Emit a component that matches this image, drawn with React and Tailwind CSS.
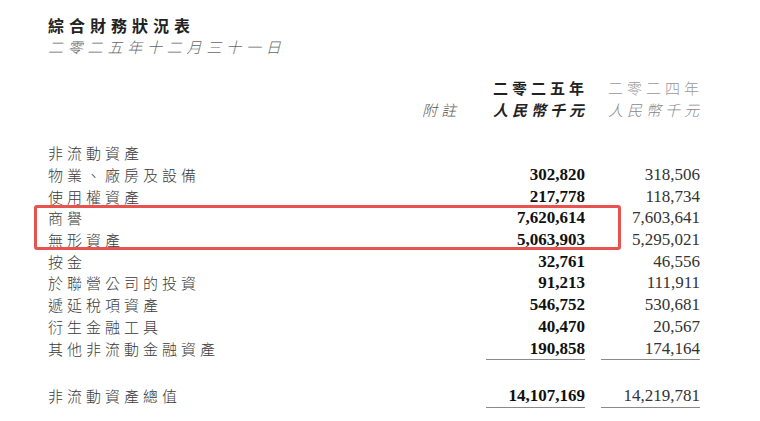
import React from 'react';

const rows = [
  { label: '非流動資產', cur: '', prev: '' },
  { label: '物業、廠房及設備', cur: '302,820', prev: '318,506' },
  { label: '使用權資產', cur: '217,778', prev: '118,734' },
  { label: '商譽', cur: '7,620,614', prev: '7,603,641', hl: true },
  { label: '無形資產', cur: '5,063,903', prev: '5,295,021', hl: true },
  { label: '按金', cur: '32,761', prev: '46,556' },
  { label: '於聯營公司的投資', cur: '91,213', prev: '111,911' },
  { label: '遞延稅項資產', cur: '546,752', prev: '530,681' },
  { label: '衍生金融工具', cur: '40,470', prev: '20,567' },
  { label: '其他非流動金融資產', cur: '190,858', prev: '174,164' },
];

const cjk = "font-['Noto_Sans_CJK_TC','Noto_Sans_CJK_SC',sans-serif]";
const num = "font-['Liberation_Serif','Times_New_Roman',serif] text-[17px]";

const Row = ({ r }) => (
  <div className="grid grid-cols-[1fr_50px_99px_99px] gap-x-[16px] h-[21.7px] items-center">
    <div className={`${cjk} text-[15px] tracking-[4px] text-[#3a3a3a] font-light leading-none whitespace-nowrap`}>{r.label}</div>
    <div></div>
    <div className={`${num} font-bold text-[#111] text-right leading-none`}>{r.cur}</div>
    <div className={`${num} text-[#333] text-right leading-none`}>{r.prev}</div>
  </div>
);

const Rule = () => (
  <div className="grid grid-cols-[1fr_50px_99px_99px] gap-x-[16px]">
    <div></div>
    <div></div>
    <div className="h-px bg-[#8a8a8a]"></div>
    <div className="h-px bg-[#8a8a8a]"></div>
  </div>
);

export default function App() {
  const top = rows.slice(0, 3);
  const hl = rows.slice(3, 5);
  const rest = rows.slice(5);

  return (
    <div className="w-[760px] h-[421px] bg-white overflow-hidden pl-[48px] pr-[60px] pt-[14px]">
      {/* Title */}
      <div className={`${cjk} text-[16px] leading-[22px] font-bold tracking-[5px] text-[#222]`}>綜合財務狀況表</div>
      <div className={`${cjk} text-[15px] leading-[22px] italic font-light tracking-[4.8px] text-[#666]`}>二零二五年十二月三十一日</div>

      {/* Column headers */}
      <div className={`${cjk} mt-[19px] grid grid-cols-[1fr_50px_99px_99px] gap-x-[16px] text-[15px] leading-[22px]`}>
        <div></div>
        <div></div>
        <div className="text-right font-bold tracking-[4px] text-[#222] -mr-[3px]">二零二五年</div>
        <div className="text-right font-light tracking-[4px] text-[#999] -mr-[3px]">二零二四年</div>
        <div></div>
        <div className="text-right italic font-light tracking-[4px] text-[#555] mr-[10px] whitespace-nowrap">附註</div>
        <div className="text-right italic font-bold tracking-[4px] text-[#222] -mr-[3px]">人民幣千元</div>
        <div className="text-right italic font-light tracking-[4px] text-[#888] -mr-[3px]">人民幣千元</div>
      </div>

      {/* Body */}
      <div className="mt-[21px]">
        {top.map((r, i) => <Row key={i} r={r} />)}
        <div className="relative">
          {hl.map((r, i) => <Row key={i} r={r} />)}
          <div className="absolute -left-[14px] -top-[2px] bottom-0 right-[79px] border-[3px] border-[#e8534f] rounded-[3px]"></div>
        </div>
        {rest.map((r, i) => <Row key={i} r={r} />)}
        <Rule />
      </div>

      {/* Total */}
      <div className="mt-[25px]">
        <Row r={{ label: '非流動資產總值', cur: '14,107,169', prev: '14,219,781' }} />
        <Rule />
      </div>
    </div>
  );
}
